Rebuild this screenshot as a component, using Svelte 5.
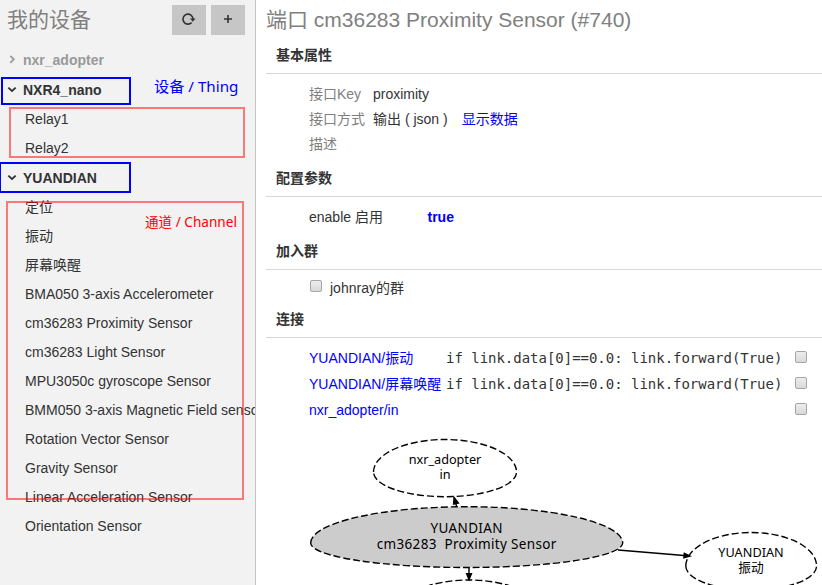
<script>
  const devices = [
    { name: 'nxr_adopter', open: false, channels: [] },
    { name: 'NXR4_nano', open: true, channels: ['Relay1', 'Relay2'] },
    {
      name: 'YUANDIAN',
      open: true,
      channels: [
        '定位',
        '振动',
        '屏幕唤醒',
        'BMA050 3-axis Accelerometer',
        'cm36283 Proximity Sensor',
        'cm36283 Light Sensor',
        'MPU3050c gyroscope Sensor',
        'BMM050 3-axis Magnetic Field sensor',
        'Rotation Vector Sensor',
        'Gravity Sensor',
        'Linear Acceleration Sensor',
        'Orientation Sensor'
      ]
    }
  ];

  const rule = 'if link.data[0]==0.0: link.forward(True)';
  const links = [
    { target: 'YUANDIAN/振动', rule },
    { target: 'YUANDIAN/屏幕唤醒', rule },
    { target: 'nxr_adopter/in', rule: '' }
  ];
</script>

<div class="app">
  <aside>
    <header>
      <h1>我的设备</h1>
      <div class="tools">
        <button aria-label="refresh">
          <svg width="16" height="14" viewBox="0 0 16 14">
            <path d="M10.6 10.6A5 5 0 1 1 12 7" fill="none" stroke="#333" stroke-width="1.6" />
            <path d="M9 6.500H14.600L11.800 9.700z" fill="#333" />
          </svg>
        </button>
        <button aria-label="add">
          <svg width="10" height="10" viewBox="0 0 10 10">
            <path d="M5 1v8M1 5h8" stroke="#333" stroke-width="1.6" />
          </svg>
        </button>
      </div>
    </header>
    <nav>
      {#each devices as device}
        <div class="device" class:closed={!device.open}>
          <svg class="chevron" width="10" height="10" viewBox="0 0 10 10">
            <path d={device.open ? 'M1.3 2.6L5 6L8.7 2.6' : 'M3.3 .8L6.8 4.3L3.3 7.8'} />
          </svg>
          <span>{device.name}</span>
        </div>
        {#each device.channels as channel}
          <div class="channel">{channel}</div>
        {/each}
      {/each}
    </nav>
    <div class="mark thing first"></div>
    <div class="mark thing second"></div>
    <div class="mark chan relays"></div>
    <div class="mark chan sensors"></div>
    <div class="note thing-note">设备 / Thing</div>
    <div class="note chan-note">通道 / Channel</div>
  </aside>

  <main>
    <h1>端口 cm36283 Proximity Sensor (#740)</h1>

    <h2>基本属性</h2>
    <section class="props">
      <div class="prop"><span class="key">接口Key</span><span>proximity</span></div>
      <div class="prop"><span class="key">接口方式</span><span>输出 ( json )</span><a>显示数据</a></div>
      <div class="prop"><span class="key">描述</span></div>
    </section>

    <h2>配置参数</h2>
    <section class="config">
      <span class="param">enable 启用</span><b>true</b>
    </section>

    <h2>加入群</h2>
    <section class="groups">
      <i class="check"></i><span>johnray的群</span>
    </section>

    <h2>连接</h2>
    <section class="links">
      {#each links as link}
        <div class="link">
          <a>{link.target}</a>
          <code>{link.rule}</code>
          <i class="check"></i>
        </div>
      {/each}
    </section>

    <svg class="graph" width="566" height="162" viewBox="256 423 566 162">
      <g class="node">
        <path d="M373.5 472A71.5 32.5 0 0 1 516.5 472A71.5 24.7 0 0 1 373.5 472" />
        <path class="current" d="M310.7 543A156 36.3 0 0 1 622.7 543A156 24.5 0 0 1 310.7 543" />
        <path d="M685.8 566A65.4 33.5 0 0 1 816.6 566A65.4 24 0 0 1 685.8 566" />
        <path d="M398 612A71 32 0 0 1 540 612" />
      </g>
      <path class="edge" d="M456.6 506.5L455 500M469 567.5V576M618 550L684 555.5" />
      <path d="M453.5 495.5L452.8 505L459.6 503.5zM465.6 573H472.5L469 581.5zM683.7 552.2L683.1 558.8L692 556.2z" />
      <g class="label">
        <text x="445" y="464" textLength="72.5">nxr_adopter</text>
        <text x="445" y="479">in</text>
        <text x="466.5" y="533" textLength="72" class="large">YUANDIAN</text>
        <text x="466.5" y="549" textLength="179.5" class="large" xml:space="preserve">cm36283&nbsp; Proximity Sensor</text>
        <text x="751" y="557" textLength="65.5">YUANDIAN</text>
        <text x="751" y="572">振动</text>
      </g>
    </svg>
  </main>
</div>

<style>
  .app {
    display: flex;
    width: 822px;
    height: 585px;
    overflow: hidden;
    background: #fff;
    color: #333;
    font: 14px/25px 'Liberation Sans', 'Noto Sans CJK SC', sans-serif;
  }
  aside {
    position: relative;
    box-sizing: border-box;
    flex: 0 0 256px;
    overflow: hidden;
    background: #f2f2f2;
    border-right: 1px solid #c4c4c4;
  }
  h1, h2 { margin: 0; }
  h1 { font-size: 21px; font-weight: 400; line-height: 38px; color: #808080; }
  header {
    display: flex;
    justify-content: space-between;
    height: 45px;
    padding: 0 10px 0 7px;
  }
  header h1 { line-height: 39px; }
  .tools { display: flex; gap: 5px; padding-top: 5px; }
  button {
    display: flex;
    align-items: center;
    justify-content: center;
    width: 34px;
    height: 30px;
    padding: 0 0 2px;
    border: 0;
    background: #c6c6c6;
  }
  .device {
    display: flex;
    align-items: center;
    gap: 6px;
    height: 30px;
    padding-left: 7px;
    font-weight: 700;
  }
  .chevron path { fill: none; stroke: #333; stroke-width: 1.8; }
  .closed { color: #999; }
  .closed .chevron path { stroke: #999; }
  .channel { height: 29px; padding-left: 25px; line-height: 29px; white-space: nowrap; }
  .mark { position: absolute; box-sizing: border-box; }
  .thing { border: 2px solid #00f; }
  .first { left: 1px; top: 77px; width: 130px; height: 28px; }
  .second { left: -1px; top: 162px; width: 132px; height: 31px; }
  .chan { border: 2px solid rgba(255, 0, 0, 0.5); }
  .relays { left: 9px; top: 107px; width: 236px; height: 51px; }
  .sensors { left: 6px; top: 201px; width: 238px; height: 299px; }
  .note { position: absolute; font-family: 'Noto Sans', 'Noto Sans CJK SC', sans-serif; white-space: nowrap; }
  .thing-note { left: 154px; top: 74px; font-size: 15.2px; color: #00f; }
  .chan-note { left: 145px; top: 209px; font-size: 13.6px; color: #f00; }

  main { flex: 1; min-width: 0; }
  main h1 { padding-left: 10px; height: 38px; line-height: 39px; }
  h2 {
    box-sizing: border-box;
    height: 36px;
    margin-left: 10px;
    padding-left: 10px;
    border-bottom: 1px solid #d8d8d8;
    font-size: 14px;
    line-height: 34px;
  }
  section { padding-left: 53px; }
  a { color: #00f; }
  .props { height: 79px; padding-top: 8px; }
  .prop { display: flex; }
  .key { width: 64px; color: #808080; }
  .prop a { margin-left: 14px; }
  .config { display: flex; height: 29px; padding-top: 8px; }
  .param { width: 118.5px; }
  .config b { color: #00f; }
  .groups { display: flex; gap: 7px; height: 26px; padding-top: 6px; }
  .check {
    box-sizing: border-box;
    flex: none;
    width: 12px;
    height: 12px;
    border: 1px solid #a6a6a6;
    border-radius: 2px;
    background: linear-gradient(#ededed, #d9d9d9);
  }
  .groups .check { margin: 4px 1px 0; }
  .links { height: 78px; padding-top: 7px; }
  .link { display: flex; height: 26px; line-height: 26px; }
  .link a { width: 137px; white-space: nowrap; }
  .link code { width: 349px; font: 14px/26px 'DejaVu Sans Mono', monospace; letter-spacing: -0.02px; white-space: nowrap; }
  .link .check { margin-top: 6px; }
  .graph { display: block; }
  .node path { fill: none; stroke: #000; stroke-width: 1.4; stroke-dasharray: 7 3; }
  .node .current { fill: #ccc; }
  .edge { fill: none; stroke: #000; stroke-width: 1.4; }
  .label { font: 12.7px 'Noto Sans', 'Noto Sans CJK SC', sans-serif; text-anchor: middle; }
  .large { font-size: 13.5px; }
</style>
